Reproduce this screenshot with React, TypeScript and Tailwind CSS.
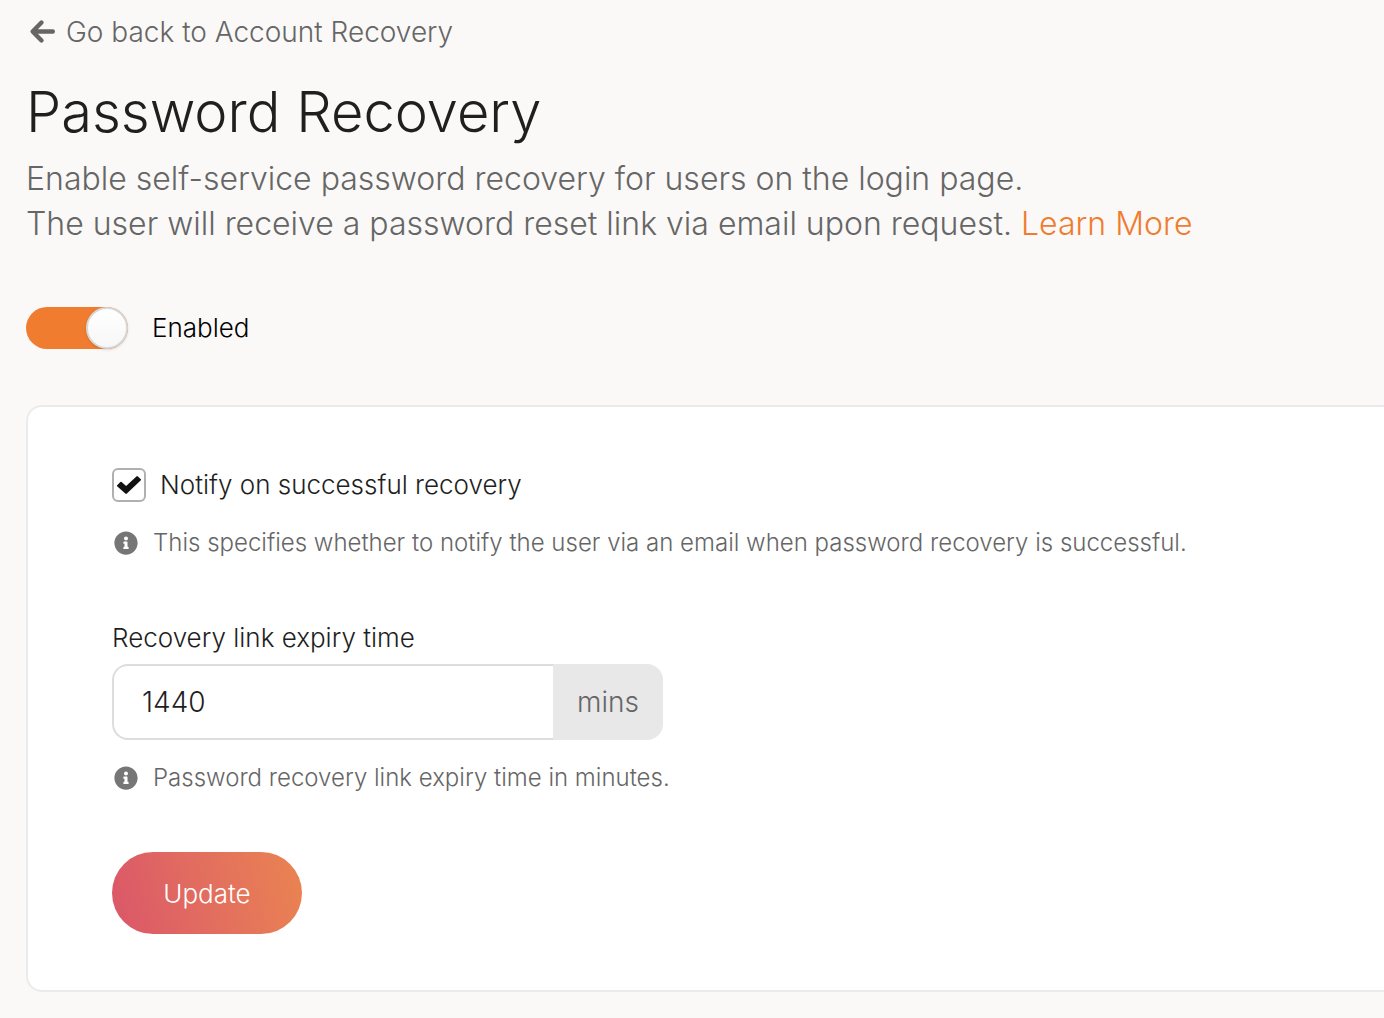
import { useState } from "react";
import { FaInfoCircle } from "react-icons/fa";

function Hint({ children }: { children: string }) {
  return (
    <p className="flex items-center gap-[15px] text-2xl leading-9 text-[#666666]">
      <FaInfoCircle className="ml-0.5 size-6 shrink-0 text-[#767676]" aria-hidden="true" />
      {children}
    </p>
  );
}

function BackArrow() {
  return (
    <svg
      viewBox="0 0 28 28"
      className="size-7"
      fill="none"
      stroke="currentColor"
      strokeWidth="4.4"
      strokeLinecap="round"
      strokeLinejoin="round"
      aria-hidden="true"
    >
      <path d="M13.500 4.500 4.600 13.500l8.900 9M5 13.500h19.800" />
    </svg>
  );
}

function Tick() {
  return (
    <svg
      viewBox="0 0 24 18"
      className="pointer-events-none invisible col-start-1 row-start-1 h-[18px] w-6 text-[#111111] peer-checked:visible"
      fill="currentColor"
      aria-hidden="true"
    >
      <path d="M9.9 17.6a1.2 1.2 0 0 1-1.6 0L.4 10.500a1.100 1.100 0 0 1 0-1.600l2.700-2.700a1.100 1.100 0 0 1 1.500-.1l4.500 4 10.300-9.700a1.100 1.100 0 0 1 1.500 0l2.700 2.600a1.100 1.100 0 0 1 0 1.600z" />
    </svg>
  );
}

export default function App() {
  const [enabled, setEnabled] = useState(true);
  const [notify, setNotify] = useState(true);
  const [minutes, setMinutes] = useState("1440");

  return (
    <main className="min-h-screen overflow-x-hidden bg-[#faf9f8] pt-3 pb-6 pl-[26px] font-['Inter',sans-serif] font-[350] text-[#1f1f1f]">
      <a href="#account-recovery" className="ml-0.5 flex w-fit items-center gap-2.5 text-[28px] leading-10 text-[#666666]">
        <BackArrow />
        Go back to Account Recovery
      </a>

      <h1 className="mt-6 text-[56px] leading-[72px] font-[350]">Password Recovery</h1>
      <p className="mt-2 text-[32px] leading-[45px] text-[#666666]">
        Enable self-service password recovery for users on the login page.
        <br />
        The user will receive a password reset link via email upon request.{" "}
        <a href="#learn-more" className="text-[#f07c30]">Learn More</a>
      </p>

      <label className="mt-[61px] flex w-fit items-center gap-6 text-[26px] leading-[42px] text-black">
        <input
          type="checkbox"
          role="switch"
          checked={enabled}
          onChange={(e) => setEnabled(e.target.checked)}
          className="h-[42px] w-[102px] appearance-none rounded-full bg-[#dddddd] before:block before:size-[42px] before:rounded-full before:border-2 before:border-[#d8d8d8] before:bg-linear-to-b before:from-white before:to-[#f7f7f7] before:shadow-sm checked:bg-[#f07c30] checked:before:ml-[60px]"
        />
        Enabled
      </label>

      <section className="mt-14 rounded-l-2xl border-2 border-r-0 border-[#ebebeb] bg-white px-[84px] pt-[58px] pb-14">
        <label className="flex w-fit items-center gap-3.5 text-[26px] leading-10">
          <span className="grid size-[34px] place-items-center">
            <input
              type="checkbox"
              checked={notify}
              onChange={(e) => setNotify(e.target.checked)}
              className="peer col-start-1 row-start-1 size-[34px] appearance-none rounded-md border-2 border-[#b0b0b0] bg-white"
            />
            <Tick />
          </span>
          Notify on successful recovery
        </label>
        <div className="mt-5">
          <Hint>This specifies whether to notify the user via an email when password recovery is successful.</Hint>
        </div>

        <label htmlFor="expiry" className="mt-[57px] block w-fit text-[26px] leading-10">
          Recovery link expiry time
        </label>
        <div className="mt-1.5 flex h-[76px] max-w-[551px]">
          <input
            id="expiry"
            value={minutes}
            onChange={(e) => setMinutes(e.target.value)}
            className="min-w-0 flex-1 rounded-l-2xl border-2 border-r-0 border-[#dddddd] bg-white px-7 text-[28px] outline-none"
          />
          <span className="grid w-[110px] place-items-center rounded-r-2xl bg-[#e8e8e8] text-[28px] text-[#666666]">mins</span>
        </div>
        <div className="mt-5">
          <Hint>Password recovery link expiry time in minutes.</Hint>
        </div>

        <button type="button" className="mt-14 h-[82px] min-w-[190px] rounded-full bg-linear-75 from-[#da5669] to-[#ea8450] px-10 text-[26px] text-white">
          Update
        </button>
      </section>
    </main>
  );
}
